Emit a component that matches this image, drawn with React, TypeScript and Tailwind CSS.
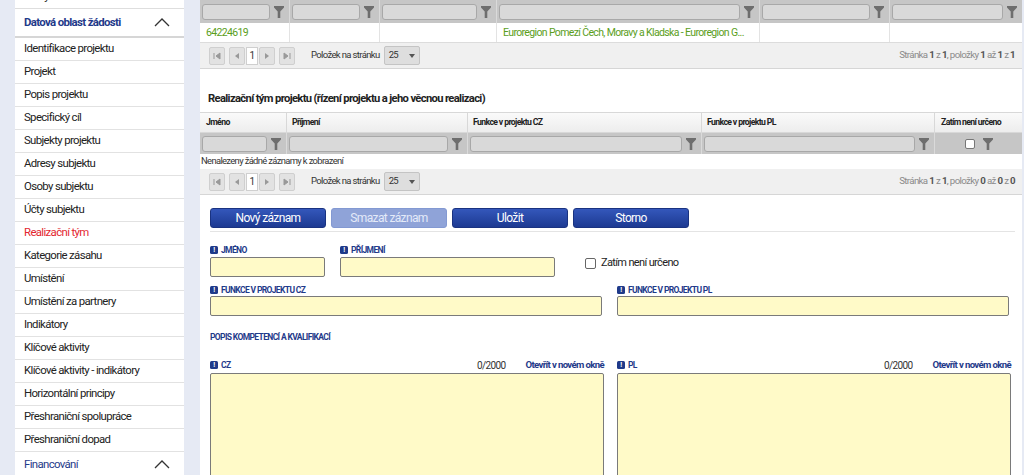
import React from "react";

const Funnel = () => (
  <svg width="10" height="12" viewBox="0 0 10 12" className="shrink-0">
    <path d="M0 0h10v1.5L6.3 5.5V12H3.7V5.5L0 1.5z" fill="#6e6e6e" />
  </svg>
);

const Chevron = () => (
  <svg width="16" height="9" viewBox="0 0 16 9">
    <path d="M1 8L8 1l7 7" fill="none" stroke="#333" strokeWidth="1.3" />
  </svg>
);

const Info = () => (
  <span className="inline-flex items-center justify-center w-[8px] h-[8px] bg-[#1f3a8a] rounded-[1.5px] text-white text-[7px] font-bold leading-none mr-[3px] shrink-0">
    !
  </span>
);

const sideItems = [
  "Identifikace projektu",
  "Projekt",
  "Popis projektu",
  "Specifický cíl",
  "Subjekty projektu",
  "Adresy subjektu",
  "Osoby subjektu",
  "Účty subjektu",
  "Realizační tým",
  "Kategorie zásahu",
  "Umístění",
  "Umístění za partnery",
  "Indikátory",
  "Klíčové aktivity",
  "Klíčové aktivity - indikátory",
  "Horizontální principy",
  "Přeshraniční spolupráce",
  "Přeshraniční dopad",
];

const PagerIcon = ({ kind }: { kind: "first" | "prev" | "next" | "last" }) => (
  <span className="w-[16px] h-[18px] bg-[#e2e2e2] border border-[#cfcfcf] rounded-[2px] flex items-center justify-center">
    <svg width="8" height="8" viewBox="0 0 8 8">
      {kind === "first" && <path d="M1 1v6M7 1L3 4l4 3z" stroke="#999" fill="#999" strokeWidth="1" />}
      {kind === "prev" && <path d="M6 1L2 4l4 3z" fill="#999" />}
      {kind === "next" && <path d="M2 1l4 3-4 3z" fill="#999" />}
      {kind === "last" && <path d="M7 1v6M1 1l4 3-4 3z" stroke="#999" fill="#999" strokeWidth="1" />}
    </svg>
  </span>
);

const Pager = ({ info }: { info: React.ReactNode }) => (
  <div className="h-[26px] bg-[#f0f0f0] border-b border-[#d6d6d6] flex items-center pl-[9px] pr-[7px]">
    <div className="flex items-center gap-[4px]">
      <PagerIcon kind="first" />
      <PagerIcon kind="prev" />
      <span className="w-[12px] h-[18px] bg-white border border-[#cfcfcf] text-[10px] text-[#333] flex items-center justify-center -mx-[3px]">1</span>
      <PagerIcon kind="next" />
      <PagerIcon kind="last" />
    </div>
    <span className="ml-[16px] text-[9.5px] text-[#333] whitespace-nowrap">Položek na stránku</span>
    <span className="ml-[4px] w-[36px] h-[19px] bg-[#dedede] border border-[#c4c4c4] rounded-[2px] flex items-center justify-between px-[4px] text-[9.5px] text-[#333]">
      25
      <svg width="6" height="4" viewBox="0 0 6 4"><path d="M0 0h6L3 4z" fill="#555" /></svg>
    </span>
    <span className="ml-auto text-[9.7px] text-[#8a8a8a] whitespace-nowrap">{info}</span>
  </div>
);

const FilterCell = ({ last }: { last?: boolean }) => (
  <div className={`flex items-center gap-[4px] pl-[2px] pr-[5px] ${last ? "" : "border-r border-[#dadada]"}`}>
    <div className="flex-1 h-[16px] bg-[#d9d9d9] border border-[#a8a8a8] rounded-[3px]" />
    <Funnel />
  </div>
);

const B = ({ children }: { children: React.ReactNode }) => (
  <b className="text-[#555] font-bold">{children}</b>
);

const Btn = ({ children, disabled }: { children: React.ReactNode; disabled?: boolean }) => (
  <button
    className={`w-[116px] h-[20px] rounded-[3px] text-[12px] ${
      disabled
        ? "bg-[#8fa3d8] text-[#e4eaf8] border border-[#8399d2]"
        : "bg-gradient-to-b from-[#3457bb] to-[#1d3a92] text-white border border-[#1a3381]"
    }`}
  >
    {children}
  </button>
);

const Label = ({ children }: { children: React.ReactNode }) => (
  <div className="flex items-center h-[12px] text-[8.5px] font-bold text-[#1f3a8a] uppercase whitespace-nowrap">
    <Info />
    {children}
  </div>
);

const YInput = ({ className }: { className: string }) => (
  <div className={`h-[20px] bg-[#fffac8] border border-[#7a7a7a] rounded-[2px] ${className}`} />
);

export default function App() {
  return (
    <div className="w-[1024px] h-[475px] overflow-hidden bg-[#e6eaf4] flex items-start font-['Roboto',sans-serif] tracking-[-0.04em]">
      {/* sidebar */}
      <div className="ml-[15px] w-[169px] h-[475px] shrink-0 bg-white">
        <div className="h-[23px] -mt-[14px] border-b border-[#dedede] pl-[9px] flex items-center text-[11.4px] text-[#222]">Okoly</div>
        <div className="h-[29px] border-b-2 border-[#d6d6d6] pl-[9px] pr-[14px] flex items-center justify-between">
          <span className="text-[11.4px] font-bold text-[#1f3a8a] whitespace-nowrap">Datová oblast žádosti</span>
          <Chevron />
        </div>
        {sideItems.map((s) => (
          <div
            key={s}
            className={`h-[23px] border-b border-[#e2e2e2] pl-[9px] flex items-center text-[11.4px] whitespace-nowrap ${
              s === "Realizační tým" ? "text-[#e3262f]" : "text-[#222]"
            }`}
          >
            {s}
          </div>
        ))}
        <div className="h-[25px] pl-[9px] pr-[14px] flex items-center justify-between">
          <span className="text-[11.4px] text-[#1f3a8a]">Financování</span>
          <Chevron />
        </div>
      </div>

      {/* main */}
      <div className="ml-[16px] w-[822px] h-[475px] shrink-0 bg-white">
        {/* top grid */}
        <div className="grid grid-cols-[90px_90px_117px_263px_130px_132px] h-[23px] bg-[#c6c6c6]">
          <FilterCell />
          <FilterCell />
          <FilterCell />
          <FilterCell />
          <FilterCell />
          <FilterCell last />
        </div>
        <div className="grid grid-cols-[90px_90px_117px_263px_130px_132px] h-[20px] border-b border-[#dcdcdc] text-[10.5px] text-[#5b9e1c]">
          <div className="border-r border-[#e3e3e3] pl-[6px] flex items-center">64224619</div>
          <div className="border-r border-[#e3e3e3]" />
          <div className="border-r border-[#e3e3e3]" />
          <div className="border-r border-[#e3e3e3] pl-[6px] flex items-center whitespace-nowrap overflow-hidden">
            Euroregion Pomezí Čech, Moravy a Kladska - Euroregion G...
          </div>
          <div className="border-r border-[#e3e3e3]" />
          <div />
        </div>
        <Pager
          info={
            <>
              Stránka <B>1</B> z <B>1</B>, položky <B>1</B> až <B>1</B> z <B>1</B>
            </>
          }
        />

        {/* team section */}
        <div className="h-[43px] pl-[8px] pt-[22px] text-[11.2px] font-bold text-[#222] whitespace-nowrap">
          Realizační tým projektu (řízení projektu a jeho věcnou realizaci)
        </div>
        <div className="grid grid-cols-[87px_181px_234px_233px_87px] h-[21px] bg-gradient-to-b from-[#fafafa] to-[#ededed] border-t border-b border-[#d8d8d8] text-[8.7px] font-bold text-[#222] whitespace-nowrap">
          <div className="border-r border-[#d8d8d8] pl-[6px] flex items-center">Jméno</div>
          <div className="border-r border-[#d8d8d8] pl-[5px] flex items-center">Příjmení</div>
          <div className="border-r border-[#d8d8d8] pl-[5px] flex items-center">Funkce v projektu CZ</div>
          <div className="border-r border-[#d8d8d8] pl-[5px] flex items-center">Funkce v projektu PL</div>
          <div className="pl-[6px] flex items-center">Zatím není určeno</div>
        </div>
        <div className="grid grid-cols-[87px_181px_234px_233px_87px] h-[21px] bg-[#c6c6c6]">
          <FilterCell />
          <FilterCell />
          <FilterCell />
          <FilterCell />
          <div className="flex items-center justify-center gap-[8px]">
            <span className="w-[10px] h-[10px] bg-white border border-[#777] rounded-[2px]" />
            <Funnel />
          </div>
        </div>
        <div className="h-[15px] pl-[1px] flex items-center text-[9.4px] text-[#333] whitespace-nowrap">Nenalezeny žádné záznamy k zobrazení</div>
        <Pager
          info={
            <>
              Stránka <B>1</B> z <B>1</B>, položky <B>0</B> až <B>0</B> z <B>0</B>
            </>
          }
        />

        {/* buttons */}
        <div className="ml-[10px] mt-[13px] pb-[3px] border-b border-[#e4e4e4] flex gap-[5px] w-[805px]">
          <Btn>Nový záznam</Btn>
          <Btn disabled>Smazat záznam</Btn>
          <Btn>Uložit</Btn>
          <Btn>Storno</Btn>
        </div>

        {/* form */}
        <div className="pl-[10px] pr-[12px] pt-[12px]">
          <div className="flex items-end">
            <div className="w-[115px]">
              <Label>Jméno</Label>
              <YInput className="w-[115px] mt-[1px]" />
            </div>
            <div className="ml-[15px] w-[215px]">
              <Label>Příjmení</Label>
              <YInput className="w-[215px] mt-[1px]" />
            </div>
            <div className="ml-[30px] mb-[4px] h-[20px] flex items-center gap-[5px] text-[11px] text-[#222] whitespace-nowrap">
              <span className="w-[11px] h-[11px] bg-white border border-[#666] rounded-[2px]" />
              Zatím není určeno
            </div>
          </div>
          <div className="grid grid-cols-[392px_392px] gap-x-[15px] mt-[7px]">
            <div>
              <Label>Funkce v projektu CZ</Label>
              <YInput className="mt-[0px]" />
            </div>
            <div>
              <Label>Funkce v projektu PL</Label>
              <YInput className="mt-[0px]" />
            </div>
          </div>
          <div className="mt-[15px] h-[12px] flex items-center text-[8.5px] font-bold text-[#1f3a8a] uppercase">Popis kompetencí a kvalifikací</div>
          <div className="grid grid-cols-[394px_394px] gap-x-[13px] mt-[16px]">
            {["CZ", "PL"].map((l) => (
              <div key={l}>
                <div className="flex items-center h-[12px]">
                  <Label>{l}</Label>
                  <span className="ml-auto text-[10px] text-[#333]">0/2000</span>
                  <span className="ml-[20px] text-[9.6px] font-bold text-[#1f3a8a] whitespace-nowrap">Otevřít v novém okně</span>
                </div>
                <div className="mt-[2px] h-[120px] bg-[#fffac8] border border-[#7a7a7a] rounded-[2px]" />
              </div>
            ))}
          </div>
        </div>
      </div>
    </div>
  );
}
